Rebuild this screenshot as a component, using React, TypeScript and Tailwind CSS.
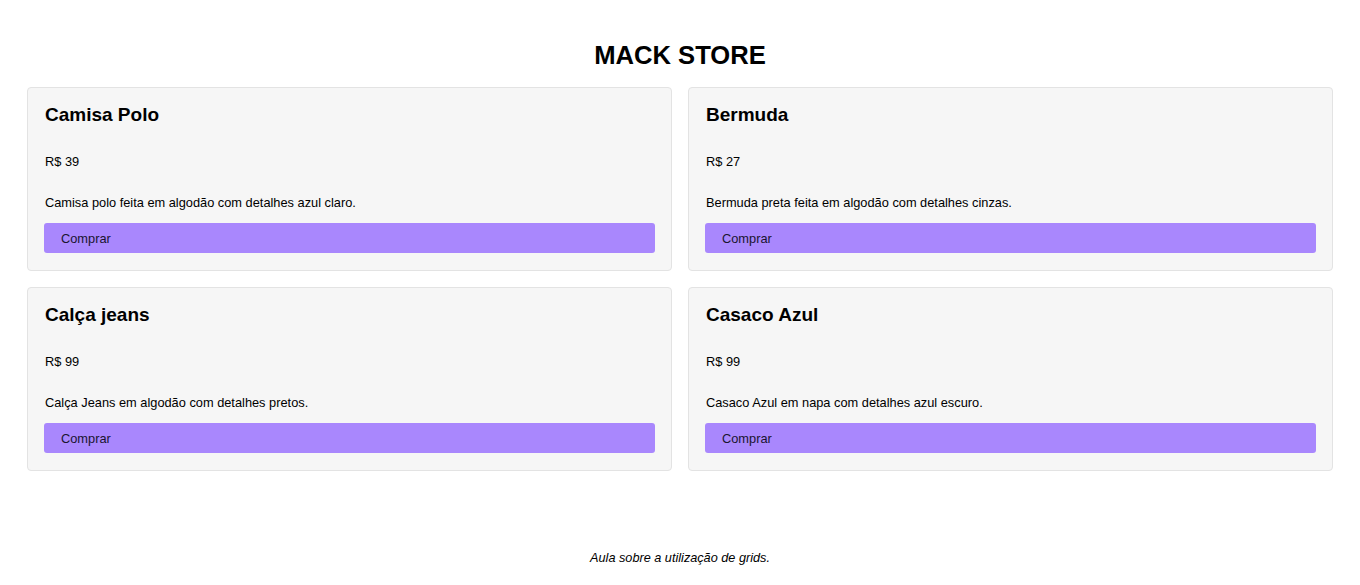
import React from "react";

const products = [
  { name: "Camisa Polo", price: "R$ 39", desc: "Camisa polo feita em algodão com detalhes azul claro." },
  { name: "Bermuda", price: "R$ 27", desc: "Bermuda preta feita em algodão com detalhes cinzas." },
  { name: "Calça jeans", price: "R$ 99", desc: "Calça Jeans em algodão com detalhes pretos." },
  { name: "Casaco Azul", price: "R$ 99", desc: "Casaco Azul em napa com detalhes azul escuro." },
];

export default function App() {
  return (
    <div className="min-h-[585px] bg-white text-black" style={{ fontFamily: '"Liberation Sans", Arial, sans-serif' }}>
      <h1 className="pt-[41px] text-center text-[25.6px] font-bold leading-[29px]">MACK STORE</h1>
      <div className="mt-[17px] grid grid-cols-2 gap-4 px-[27px]">
        {products.map((p) => (
          <div key={p.name} className="flex flex-col rounded-[4px] border border-[#e3e3e3] bg-[#f6f6f6] px-4 pt-[16px] pb-[17px]">
            <h2 className="pl-px text-[19px] font-bold leading-[22px]">{p.name}</h2>
            <p className="mt-[28px] pl-px text-[12.8px] leading-[15px]">{p.price}</p>
            <p className="mt-[26px] pl-px text-[12.8px] leading-[15px]">{p.desc}</p>
            <button className="mt-[13px] h-[30px] rounded-[3px] bg-[#a987fd] pl-[17px] pt-px pr-4 text-left text-[12.8px] text-[#1a1530]">Comprar</button>
          </div>
        ))}
      </div>
      <p className="mt-[80px] text-center text-[12.7px] italic leading-[15px]">Aula sobre a utilização de grids.</p>
    </div>
  );
}
